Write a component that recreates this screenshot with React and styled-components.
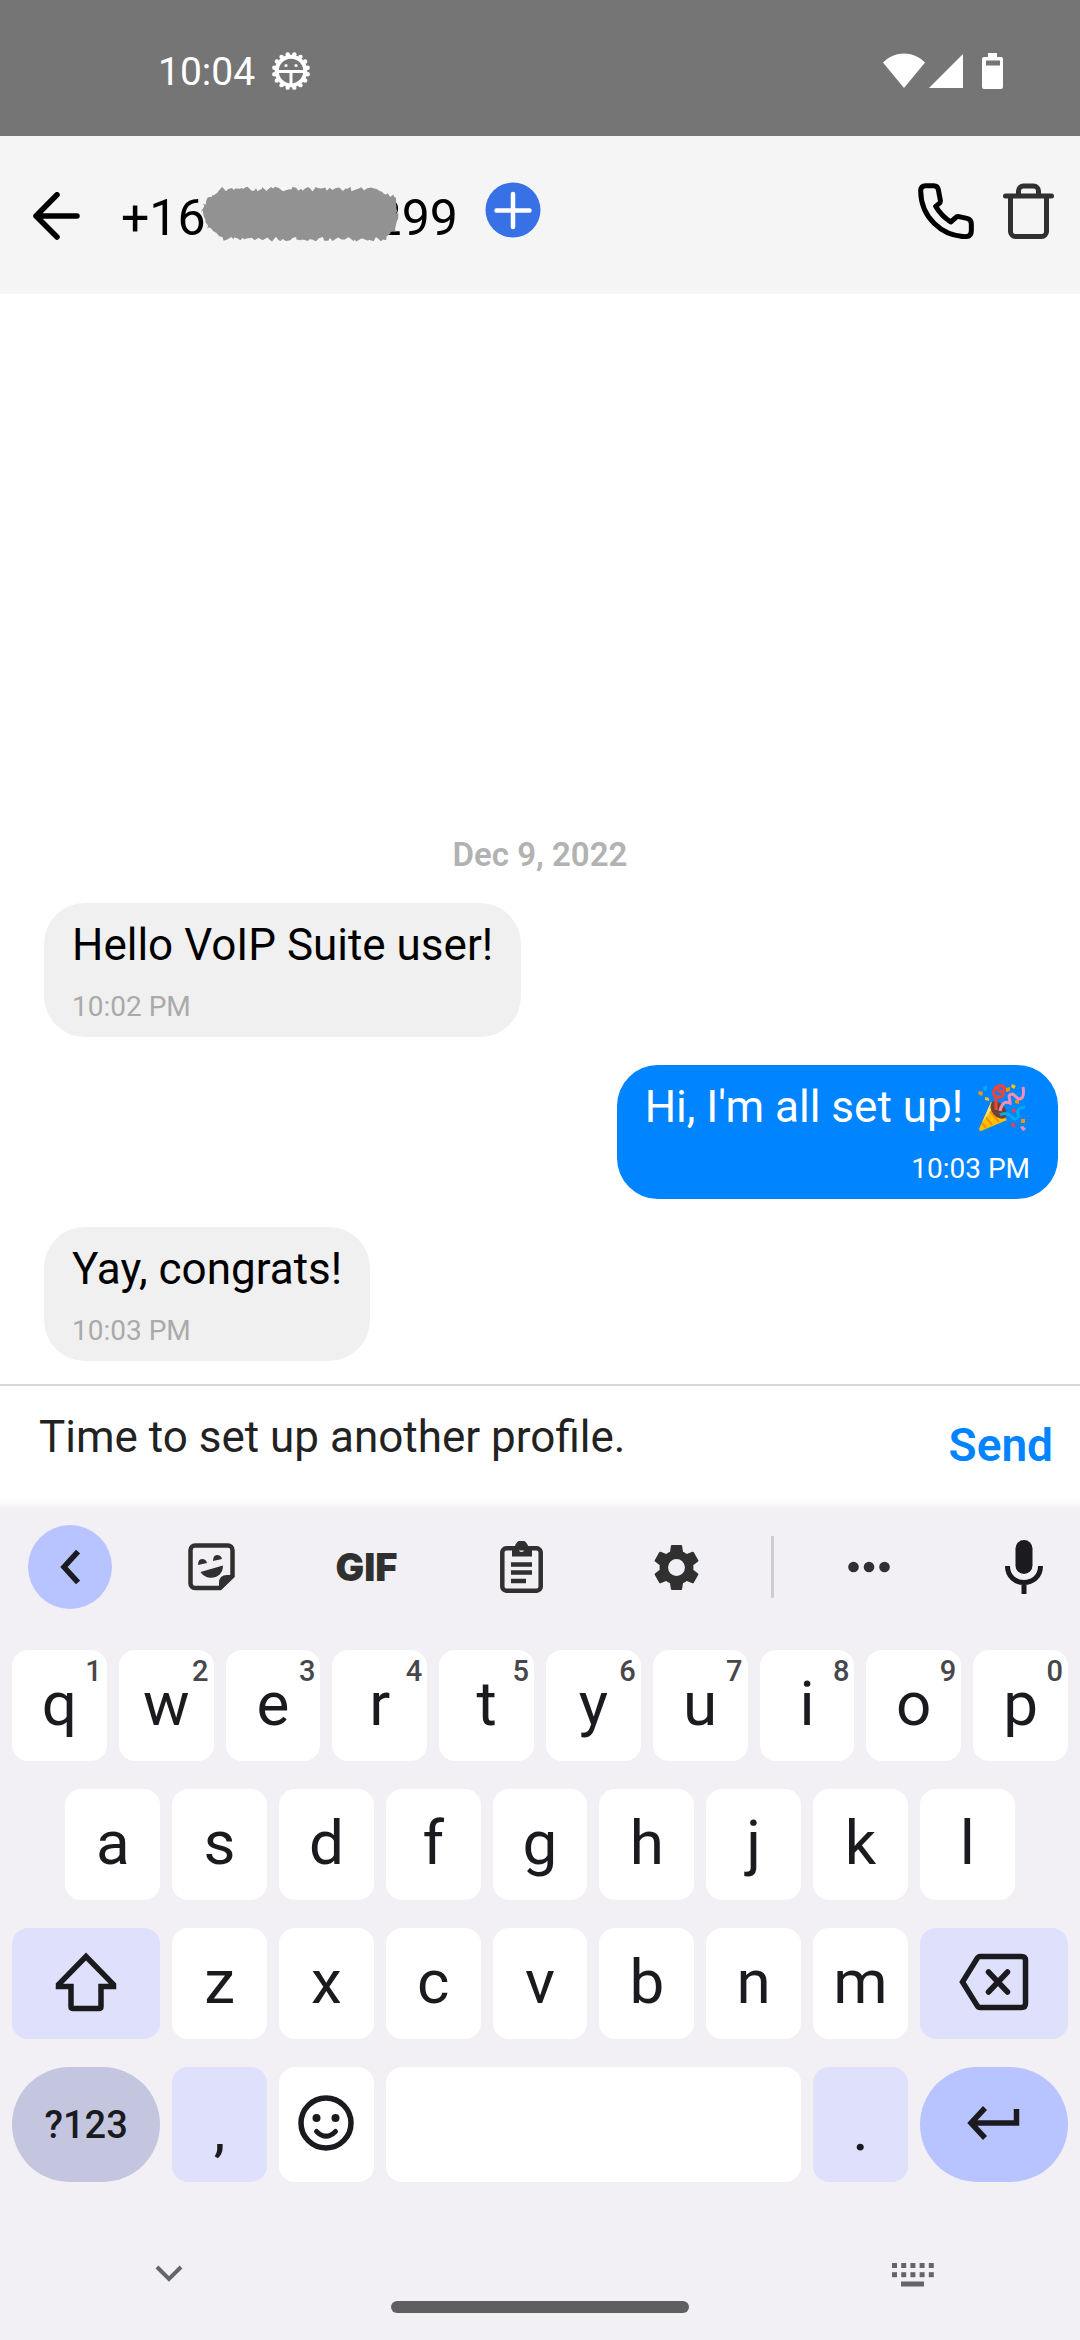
import React from "react";
import styled, { createGlobalStyle } from "styled-components";

const GlobalStyle = createGlobalStyle`
  * { box-sizing: border-box; }
  body { margin: 0; background: #ffffff; }
  button { border: 0; padding: 0; background: none; color: inherit; font: inherit; cursor: pointer; }
  svg { display: block; flex: none; }
`;

const Screen = styled.div`
  display: flex;
  flex-direction: column;
  min-height: 100vh;
  background: #ffffff;
  color: #000000;
  font-family: Roboto, "Liberation Sans", sans-serif;
`;

/* Status bar */
const StatusBar = styled.div`
  display: flex;
  align-items: center;
  justify-content: space-between;
  height: 136px;
  padding: 6px 77px 0 158px;
  background: #757575;
  color: #ffffff;
`;

const StatusGroup = styled.div`
  display: flex;
  align-items: center;
  gap: ${(p) => p.$gap}px;
`;

const Clock = styled.time`
  padding-top: 2px;
  font-size: 39px;
  line-height: 48px;
`;

/* Header */
const Header = styled.header`
  display: flex;
  align-items: center;
  height: 158px;
  padding: 0 26px 8px 33px;
  background: #f5f5f5;
`;

const Contact = styled.div`
  display: flex;
  align-items: center;
  gap: 40px;
  padding-top: 14px;
`;

const Title = styled.h1`
  position: relative;
  display: flex;
  gap: 168px;
  margin: 0;
  font-size: 50px;
  font-weight: 400;
  line-height: 60px;
`;

const Redaction = styled.svg`
  position: absolute;
  left: 80px;
  top: -4px;
`;

const AddButton = styled.button`
  margin: 0 0 2px 27px;
`;

const Actions = styled.div`
  display: flex;
  align-items: center;
  gap: 29px;
  margin-left: auto;
`;

/* Conversation */
const Conversation = styled.main`
  display: flex;
  flex: 1;
  flex-direction: column;
  justify-content: flex-end;
  gap: 28px;
  padding: 28px 22px 23px 44px;
`;

const DateLabel = styled.h2`
  align-self: center;
  margin: 0 22px 0 0;
  color: #b2b2b2;
  font-size: 33px;
  font-weight: 600;
  line-height: 40px;
`;

const Bubble = styled.article`
  display: flex;
  flex-direction: column;
  align-items: ${(p) => (p.$mine ? "flex-end" : "flex-start")};
  align-self: ${(p) => (p.$mine ? "flex-end" : "flex-start")};
  gap: 16px;
  padding: 14px 28px 12px;
  border-radius: 41px;
  background: ${(p) => (p.$mine ? "#0084ff" : "#f0f0f0")};
  color: ${(p) => (p.$mine ? "#ffffff" : "#000000")};
`;

const MessageText = styled.p`
  display: flex;
  align-items: center;
  gap: 15px;
  margin: 0;
  font-size: 44px;
  line-height: 56px;
`;

const MessageTime = styled.time`
  color: ${(p) => (p.$mine ? "#ffffff" : "#aaaaaa")};
  font-size: 28px;
  line-height: 36px;
`;

/* Composer */
const Composer = styled.form`
  display: flex;
  align-items: center;
  height: 123px;
  padding: 0 27px 0 39px;
  border-top: 2px solid #d8d8d8;
  background: linear-gradient(#ffffff 112px, #f5f5f6);
`;

const MessageInput = styled.input`
  flex: 1;
  min-width: 0;
  height: 60px;
  margin-bottom: 20px;
  padding: 0;
  border: 0;
  outline: 0;
  background: transparent;
  color: #222222;
  font-family: inherit;
  font-size: 44px;
`;

const SendButton = styled.button`
  && {
    margin-bottom: 4px;
    color: #0084ff;
    font-size: 46px;
    font-weight: 600;
    line-height: 56px;
  }
`;

/* Keyboard */
const Keyboard = styled.section`
  padding: 18px 12px 0;
  background: #f2f0f5;
  color: #1b1b1f;
`;

const Toolbar = styled.div`
  display: grid;
  grid-template-columns: 106fr 155fr 155fr 155fr 155fr 37fr 155fr 97fr;
  align-items: center;
  justify-items: center;
  height: 84px;
  margin-bottom: 41px;
  padding: 0 25px 0 16px;
  color: #303030;
`;

const ToolButton = styled.button`
  display: grid;
  place-items: center;
  height: 84px;
`;

const CollapseButton = styled(ToolButton)`
  && {
    justify-self: start;
    width: 84px;
    border-radius: 50%;
    background: #b8c4ff;
  }
`;

const VoiceButton = styled(ToolButton)`
  justify-self: end;
`;

const GifButton = styled(ToolButton)`
  && {
    font-family: Inter, sans-serif;
    font-size: 38px;
    font-weight: 900;
  }
`;

const Divider = styled.span`
  width: 3px;
  height: 62px;
  background: #cfcdd2;
`;

const Keys = styled.div`
  display: grid;
  grid-template-columns: repeat(20, minmax(0, 1fr));
  grid-template-rows: repeat(3, 111px) 115px;
  gap: 28px 12px;
`;

const keyColors = {
  plain: "#ffffff",
  soft: "#dfe0fb",
  muted: "#c4c5df",
  accent: "#b8c4ff",
};

const keyText = {
  letter: { size: 62, weight: 400, padding: "0 0 3px" },
  mark: { size: 52, weight: 500, padding: "16px 0 0" },
  label: { size: 38, weight: 500, padding: "0" },
};

const Key = styled.button`
  && {
    position: relative;
    display: grid;
    place-items: center;
    grid-column: ${(p) => (p.$start ? `${p.$start} / ` : "")}span ${(p) => p.$span || 2};
    border-radius: ${(p) => (p.$round ? 58 : 16)}px;
    background: ${(p) => keyColors[p.$tone || "plain"]};
    padding: ${(p) => keyText[p.$text || "letter"].padding};
    font-size: ${(p) => keyText[p.$text || "letter"].size}px;
    font-weight: ${(p) => keyText[p.$text || "letter"].weight};
    line-height: 72px;
  }
`;

const Hint = styled.span`
  position: absolute;
  top: 4px;
  right: 5px;
  color: #47474b;
  font-size: 29px;
  font-weight: 500;
  line-height: 34px;
`;

/* Navigation strip */
const NavStrip = styled.nav`
  display: grid;
  grid-template-columns: 1fr 298px 1fr;
  height: 158px;
  padding-top: 81px;
  color: #656567;
`;

const NavButton = styled.button`
  display: flex;
  justify-self: ${(p) => p.$side};
  align-self: start;
  && {
    padding: ${(p) => (p.$side === "start" ? "0 0 0 143px" : "0 134px 0 0")};
  }
`;

const HomeBar = styled.span`
  align-self: start;
  height: 12px;
  margin-top: 38px;
  border-radius: 6px;
  background: #5f5f61;
`;

const range = (n) => Array.from({ length: n }, (_, i) => i);

function GearFace() {
  return (
    <svg width="40" height="40" viewBox="0 0 40 40" fill="none" stroke="#fff" aria-hidden="true">
      <circle cx="20" cy="20" r="14.3" strokeWidth="4" />
      {range(16).map((i) => {
        const a = ((i + 0.5) * Math.PI) / 8;
        return <circle key={i} cx={20 + 17 * Math.cos(a)} cy={20 + 17 * Math.sin(a)} r="2.2" fill="#fff" stroke="none" />;
      })}
      <path d="M7 20.5h26M20 20v14" strokeWidth="3" />
      <g fill="#fff" stroke="none">
        <circle cx="15" cy="14.500" r="1.600" />
        <circle cx="25" cy="14.500" r="1.600" />
      </g>
    </svg>
  );
}

function WifiIcon() {
  return (
    <svg width="42" height="36" viewBox="0 0 42 36" fill="#fff" aria-hidden="true">
      <path d="M0 9.500C12-2.500 30-2.500 42 9.500L21 35Z" />
    </svg>
  );
}

function SignalIcon() {
  return (
    <svg width="35" height="36" viewBox="0 0 35 36" fill="#fff" aria-hidden="true">
      <path d="M35 1v34H1Z" />
    </svg>
  );
}

function BatteryIcon() {
  return (
    <svg width="21" height="36" viewBox="0 0 21 36" fill="#fff" fillRule="evenodd" aria-hidden="true">
      <path d="M6 0h9v4h4a2 2 0 0 1 2 2v28a2 2 0 0 1-2 2H2a2 2 0 0 1-2-2V6a2 2 0 0 1 2-2h4ZM4 7.500v5h14v-5Z" />
    </svg>
  );
}

function BackIcon() {
  return (
    <svg width="48" height="52" viewBox="0 0 48 52" fill="none" stroke="#000" strokeWidth="5.500" strokeLinecap="round" strokeLinejoin="round" aria-hidden="true">
      <path d="M24 2.800 3 24l21 21M3 24h41" />
    </svg>
  );
}

function PlusIcon() {
  return (
    <svg width="56" height="56" viewBox="0 0 56 56" aria-hidden="true">
      <circle cx="28" cy="28" r="27.500" fill="#3871e5" />
      <path d="M28 12v33M11.500 28.500h33" stroke="#fff" strokeWidth="4.500" strokeLinecap="round" />
    </svg>
  );
}

function PhoneIcon() {
  return (
    <svg width="56" height="56" viewBox="290 548 168 168" fill="none" stroke="#000" strokeWidth="15" strokeLinejoin="round" aria-hidden="true">
      <path d="M313 556h24q12 0 14 12l6 32q1 6-4 10l-10 8q16 28 45 47l14-12q4-5 11-4l24 5q13 3 13 17v20q0 18-19 18C360 707 299 650 298 572q0-16 15-16Z" />
    </svg>
  );
}

function TrashIcon() {
  return (
    <svg width="51" height="56" viewBox="0 0 51 56" fill="none" stroke="#303030" strokeWidth="5" strokeLinecap="round" strokeLinejoin="round" aria-hidden="true">
      <path d="M2.500 13h46M7.500 14v34.500a5 5 0 0 0 5 5h26a5 5 0 0 0 5-5V14M15.500 12V8a5 5 0 0 1 5-5h10a5 5 0 0 1 5 5v4" />
    </svg>
  );
}

/* Rough brush stroke: an eight-sided pill whose outline points are pushed in and out. */
function brushPath() {
  const noise = (i) => {
    const v = Math.sin(i * 12.9898) * 43758.5453;
    return (v - Math.floor(v)) * 2 - 1;
  };
  const corners = [
    [1, 26],
    [8, 13],
    [20, 5],
    [174, 5],
    [194, 13],
    [197, 34],
    [194, 46],
    [184, 55],
    [24, 55],
    [8, 45],
  ];
  const points = [];
  corners.forEach(([x1, y1], c) => {
    const [x2, y2] = corners[(c + 1) % corners.length];
    const steps = Math.max(3, Math.round(Math.hypot(x2 - x1, y2 - y1) / 2.5));
    range(steps).forEach((s) => {
      const t = s / steps;
      const seed = c * 100 + s;
      const x = x1 + (x2 - x1) * t + noise(seed) * 1.4;
      const y = y1 + (y2 - y1) * t + noise(seed + 1000) * 2.4;
      points.push(`${x.toFixed(1)} ${y.toFixed(1)}`);
    });
  });
  return `M${points.join("L")}Z`;
}

function PartyIcon() {
  return (
    <svg width="52" height="48" viewBox="0 0 52 48" fill="none" role="img" aria-label="Party popper">
      <path d="M13 19 1 46q0 2 2 2l26-11Z" fill="#ffc107" />
      <path d="m10 26 11 13M7 33l7 9M4 40l4 5" stroke="#ff9100" strokeWidth="2.200" />
      <path d="m13 19-9 21 12-17Z" fill="#ffe36c" />
      <ellipse cx="20.500" cy="27" rx="6.500" ry="10" transform="rotate(-40 20.500 27)" fill="#6d4434" />
      <path d="M18 27V15c-4-4-3-10 3-12 5-2 7 3 4 5-4 2-7-2-4-5M18 13c6 3 9-1 6-5" stroke="#f44336" strokeWidth="3" />
      <path d="M22 28c2-8 5-10 10-8 0-5-3-8 2-9 4 1 4 5 8 5 4-1 4-6 3-12" stroke="#f48fb1" strokeWidth="3" />
      <path d="M22 32c5-3 9-1 12 2 3 4 8 1 6-3-2-4 2-7 7-7" stroke="#03a9f4" strokeWidth="3" />
      <path d="M5 4l4-2v5l-3 1ZM1 15l4-4-1 2Z" fill="#03a9f4" />
      <path d="M1 8l4 1-1 4-4-2ZM28 5l4-1v4l-4 1ZM37 17h4v4l-4-1ZM43 36h4v4h-4Z" fill="#ff9100" />
      <path d="M7 14l4 1v3l-4-1ZM34 1l4 2-2 3-3-2Z" fill="#ffc107" />
      <path d="M33 27l3-2 2 3-3 2ZM34 39l3 2v4l-4-2Z" fill="#f44336" />
      <path d="M42 44l3-1 3 3-3 2Z" fill="#f48fb1" />
    </svg>
  );
}

function StickerIcon() {
  return (
    <svg width="47" height="48" viewBox="0 0 47 48" aria-hidden="true">
      <path d="M7 2.500h33a4.500 4.500 0 0 1 4.500 4.500v26L32 45H7a4.500 4.500 0 0 1-4.500-4.500V7A4.500 4.500 0 0 1 7 2.500Z" fill="none" stroke="currentColor" strokeWidth="4.500" />
      <path d="M46 33 33 47h-2V40q0-8 8-8h7ZM12.500 29 35 22.500C35 37 18 38 12.500 29ZM10 22q0-6 4-6 4 0 5 4ZM25 18q0-6 4-6 4 0 5 4Z" fill="currentColor" />
    </svg>
  );
}

function ClipboardIcon() {
  return (
    <svg width="43" height="52" viewBox="0 0 43 52" aria-hidden="true">
      <path d="M6.300 7.300h30.400a4 4 0 0 1 4 4v34.400a4 4 0 0 1-4 4H6.300a4 4 0 0 1-4-4V11.300a4 4 0 0 1 4-4Z" fill="none" stroke="currentColor" strokeWidth="4.500" />
      <path d="M11 23.500h21M11 31.500h21M11 40h15" stroke="currentColor" strokeWidth="4.500" />
      <path fillRule="evenodd" d="M12 6h3a6.500 6.500 0 0 1 13 0h4v9.500H12ZM21.500 5.500a2.700 2.700 0 1 0 0 5.400 2.700 2.700 0 0 0 0-5.400Z" fill="currentColor" />
    </svg>
  );
}

function GearIcon() {
  return (
    <svg width="47" height="47" viewBox="2 2 20 20" aria-hidden="true">
      <path
        fill="currentColor"
        d="M19.140 12.940c.04-.3.06-.61.06-.94 0-.32-.02-.64-.07-.94l2.030-1.580c.18-.14.23-.41.12-.61l-1.920-3.320c-.12-.22-.37-.29-.59-.22l-2.390.96c-.5-.38-1.030-.7-1.620-.94l-.36-2.540c-.04-.24-.24-.41-.48-.41h-3.840c-.24 0-.43.17-.47.41l-.36 2.540c-.59.24-1.130.57-1.620.94l-2.390-.96c-.22-.08-.47 0-.59.22L2.740 8.870c-.12.21-.08.47.12.61l2.030 1.580c-.05.3-.09.63-.09.94s.02.64.07.94l-2.030 1.580c-.18.14-.23.41-.12.61l1.920 3.320c.12.22.37.29.59.22l2.390-.96c.5.38 1.030.7 1.620.94l.36 2.540c.05.24.24.41.48.41h3.840c.24 0 .44-.17.47-.41l.36-2.540c.59-.24 1.130-.56 1.620-.94l2.390.96c.22.08.47 0 .59-.22l1.920-3.320c.12-.22.07-.47-.12-.61zM12 15.600a3.600 3.600 0 1 1 0-7.200 3.600 3.600 0 0 1 0 7.200z"
      />
    </svg>
  );
}

function MoreIcon() {
  return (
    <svg width="42" height="12" viewBox="0 0 42 12" fill="currentColor" aria-hidden="true">
      <circle cx="5.500" cy="6" r="5.300" />
      <circle cx="21" cy="6" r="5.300" />
      <circle cx="36.500" cy="6" r="5.300" />
    </svg>
  );
}

function MicIcon() {
  return (
    <svg width="38" height="54" viewBox="0 0 38 54" aria-hidden="true">
      <rect x="10.500" y="0" width="17" height="34" rx="8.500" fill="#1b1b1f" />
      <path d="M2.500 26c0 22 33 22 33 0M19 43v11" fill="none" stroke="#1b1b1f" strokeWidth="5" />
    </svg>
  );
}

const line = { fill: "none", stroke: "#1b1b1f", strokeWidth: 5.5, "aria-hidden": true };

const CollapseIcon = () => (
  <svg width="20" height="36" viewBox="0 0 20 36" {...line}>
    <path d="M18 2.500 4 18l14 15.500" />
  </svg>
);

const ShiftIcon = () => (
  <svg width="62" height="60" viewBox="0 0 62 60" {...line}>
    <path d="M31 4.500 3.500 32.500v2H16v20q0 2 2 2h26q2 0 2-2v-20h12.500v-2Z" />
  </svg>
);

const BackspaceIcon = () => (
  <svg width="70" height="58" viewBox="0 0 70 58" {...line} strokeLinecap="round">
    <path d="M21 3.500h41.500q4 0 4 4v43q0 4-4 4H21q-2 0-3.500-3L3.500 29l14-22.500q1.500-3 3.500-3ZM29.500 19l19 20M48.500 19l-19 20" />
  </svg>
);

const SmileIcon = () => (
  <svg width="56" height="58" viewBox="0 0 56 58" {...line} strokeLinecap="round">
    <circle cx="28" cy="29" r="25" />
    <path d="M18.500 37.500q9.500 9.500 19 0" strokeWidth="5" />
    <g fill="#1b1b1f" stroke="none">
      <circle cx="18.500" cy="24" r="4" />
      <circle cx="37.500" cy="24" r="4" />
    </g>
  </svg>
);

const EnterIcon = () => (
  <svg width="53" height="34" viewBox="0 0 53 34" {...line}>
    <path d="M18 2 4 17l14 15M4 17h45.500V3" />
  </svg>
);

const ChevronDownIcon = () => (
  <svg width="28" height="22" viewBox="0 0 28 22" fill="none" stroke="currentColor" strokeWidth="4" aria-hidden="true">
    <path d="m2 4 12 12L26 4" />
  </svg>
);

const KeyboardIcon = () => (
  <svg width="42" height="24" viewBox="0 0 42 24" fill="currentColor" aria-hidden="true">
    {range(10).map((i) => (
      <rect key={i} x={(i % 5) * 9.2} y={i < 5 ? 0 : 9.2} width="5" height="5" />
    ))}
    <rect x="9" y="18.500" width="23" height="5" />
  </svg>
);

function Message({ mine, time, children }) {
  return (
    <Bubble $mine={mine}>
      <MessageText>{children}</MessageText>
      <MessageTime $mine={mine}>{time}</MessageTime>
    </Bubble>
  );
}

export default function App() {
  return (
    <Screen>
      <GlobalStyle />
      <StatusBar>
        <StatusGroup $gap={16}>
          <Clock>10:04</Clock>
          <GearFace />
        </StatusGroup>
        <StatusGroup $gap={19}>
          <StatusGroup $gap={3}>
            <WifiIcon />
            <SignalIcon />
          </StatusGroup>
          <BatteryIcon />
        </StatusGroup>
      </StatusBar>

      <Header>
        <Contact>
          <button type="button" aria-label="Back">
            <BackIcon />
          </button>
          <Title>
            <span>+16</span>
            <span>299</span>
            <Redaction width="200" height="60" viewBox="0 0 200 60" aria-hidden="true">
              <path d={brushPath()} fill="#929292" />
            </Redaction>
          </Title>
        </Contact>
        <AddButton type="button" aria-label="Add contact">
          <PlusIcon />
        </AddButton>
        <Actions>
          <button type="button" aria-label="Call">
            <PhoneIcon />
          </button>
          <button type="button" aria-label="Delete">
            <TrashIcon />
          </button>
        </Actions>
      </Header>

      <Conversation>
        <DateLabel>Dec 9, 2022</DateLabel>
        <Message time="10:02 PM">Hello VoIP Suite user!</Message>
        <Message mine time="10:03 PM">
          Hi, I'm all set up! <PartyIcon />
        </Message>
        <Message time="10:03 PM">Yay, congrats!</Message>
      </Conversation>

      <Composer onSubmit={(e) => e.preventDefault()}>
        <MessageInput type="text" aria-label="Message" defaultValue="Time to set up another profile." />
        <SendButton type="submit">Send</SendButton>
      </Composer>

      <Keyboard aria-label="Keyboard">
        <Toolbar>
          <CollapseButton type="button" aria-label="Collapse toolbar">
            <CollapseIcon />
          </CollapseButton>
          <ToolButton type="button" aria-label="Stickers">
            <StickerIcon />
          </ToolButton>
          <GifButton type="button">GIF</GifButton>
          <ToolButton type="button" aria-label="Clipboard">
            <ClipboardIcon />
          </ToolButton>
          <ToolButton type="button" aria-label="Settings">
            <GearIcon />
          </ToolButton>
          <Divider />
          <ToolButton type="button" aria-label="More">
            <MoreIcon />
          </ToolButton>
          <VoiceButton type="button" aria-label="Voice input">
            <MicIcon />
          </VoiceButton>
        </Toolbar>

        <Keys>
          {[..."qwertyuiop"].map((k, i) => (
            <Key key={k} type="button">
              {k}
              <Hint>{(i + 1) % 10}</Hint>
            </Key>
          ))}
          {[..."asdfghjkl"].map((k, i) => (
            <Key key={k} type="button" $start={i === 0 ? 2 : undefined}>
              {k}
            </Key>
          ))}
          <Key type="button" aria-label="Shift" $start={1} $span={3} $tone="soft">
            <ShiftIcon />
          </Key>
          {[..."zxcvbnm"].map((k) => (
            <Key key={k} type="button">
              {k}
            </Key>
          ))}
          <Key type="button" aria-label="Backspace" $span={3} $tone="soft">
            <BackspaceIcon />
          </Key>
          <Key type="button" $span={3} $tone="muted" $text="label" $round>
            ?123
          </Key>
          <Key type="button" $tone="soft" $text="mark">
            ,
          </Key>
          <Key type="button" aria-label="Emoji">
            <SmileIcon />
          </Key>
          <Key type="button" aria-label="Space" $span={8} />
          <Key type="button" $tone="soft" $text="mark">
            .
          </Key>
          <Key type="button" aria-label="Enter" $span={3} $tone="accent" $round>
            <EnterIcon />
          </Key>
        </Keys>

        <NavStrip>
          <NavButton type="button" aria-label="Hide keyboard" $side="start">
            <ChevronDownIcon />
          </NavButton>
          <HomeBar />
          <NavButton type="button" aria-label="Switch keyboard" $side="end">
            <KeyboardIcon />
          </NavButton>
        </NavStrip>
      </Keyboard>
    </Screen>
  );
}
